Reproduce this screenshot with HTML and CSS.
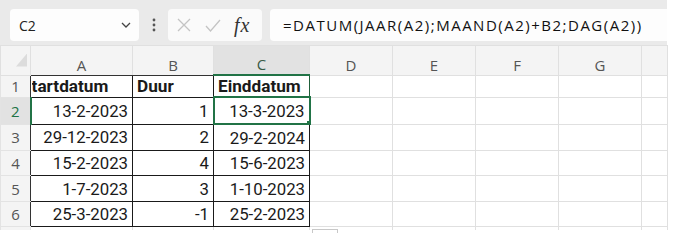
FILE: index.html
```html
<!DOCTYPE html>
<html lang="nl">
<head>
  <meta charset="UTF-8">
  <title>Einddatum</title>
  <link rel="stylesheet" href="styles.css">
</head>
<body>
  <div id="app">
    <div class="formula-bar">
      <div class="name-box">
        <span>C2</span>
        <svg class="chevron" width="10" height="6" viewBox="0 0 10 6"><path d="M1 1l4 4 4-4" fill="none" stroke="#444" stroke-width="1.3"/></svg>
      </div>
      <div class="grip">
        <svg width="4" height="14" viewBox="0 0 4 14"><circle cx="2" cy="2" r="1.4" fill="#555"/><circle cx="2" cy="7" r="1.4" fill="#555"/><circle cx="2" cy="12" r="1.4" fill="#555"/></svg>
      </div>
      <div class="fx-box">
        <svg width="14" height="14" viewBox="0 0 14 14"><path d="M1 1l12 12M13 1L1 13" stroke="#c4c4c4" stroke-width="1.3"/></svg>
        <svg width="16" height="13" viewBox="0 0 16 13"><path d="M1 7l4.5 5L15 1" fill="none" stroke="#c4c4c4" stroke-width="1.3"/></svg>
        <span class="fx">fx</span>
      </div>
      <div class="formula">=DATUM(JAAR(A2);MAAND(A2)+B2;DAG(A2))</div>
    </div>

    <table class="sheet">
      <colgroup>
        <col style="width:30px">
        <col style="width:102px">
        <col style="width:81px">
        <col style="width:96px">
        <col style="width:83px">
        <col style="width:83px">
        <col style="width:83px">
        <col style="width:83px">
        <col style="width:26px">
      </colgroup>
      <thead>
        <tr>
          <th class="corner"><span class="tri"></span></th>
          <th class="col-head dark">A</th>
          <th class="col-head dark">B</th>
          <th class="col-head active">C</th>
          <th class="col-head">D</th>
          <th class="col-head">E</th>
          <th class="col-head">F</th>
          <th class="col-head">G</th>
          <th class="col-head"></th>
        </tr>
      </thead>
      <tbody>
        <tr class="r1">
          <th class="row-head">1</th>
          <td class="box bold"><div class="clip"><span>Startdatum</span></div></td>
          <td class="box bold">Duur</td>
          <td class="box bold green-edge">Einddatum</td>
          <td></td><td></td><td></td><td></td><td></td>
        </tr>
        <tr class="r2">
          <th class="row-head active">2</th>
          <td class="box num">13-2-2023</td>
          <td class="box num">1</td>
          <td class="box num selected">13-3-2023<span class="handle"></span></td>
          <td></td><td></td><td></td><td></td><td></td>
        </tr>
        <tr class="r3">
          <th class="row-head">3</th>
          <td class="box num">29-12-2023</td>
          <td class="box num">2</td>
          <td class="box num">29-2-2024</td>
          <td></td><td></td><td></td><td></td><td></td>
        </tr>
        <tr class="r4">
          <th class="row-head">4</th>
          <td class="box num">15-2-2023</td>
          <td class="box num">4</td>
          <td class="box num">15-6-2023</td>
          <td></td><td></td><td></td><td></td><td></td>
        </tr>
        <tr class="r5">
          <th class="row-head">5</th>
          <td class="box num">1-7-2023</td>
          <td class="box num">3</td>
          <td class="box num">1-10-2023</td>
          <td></td><td></td><td></td><td></td><td></td>
        </tr>
        <tr class="r6">
          <th class="row-head">6</th>
          <td class="box num">25-3-2023</td>
          <td class="box num">-1</td>
          <td class="box num">25-2-2023</td>
          <td></td><td></td><td></td><td></td><td></td>
        </tr>
        <tr class="stub">
          <th class="row-head"></th>
          <td></td><td></td><td></td><td></td><td></td><td></td><td></td><td></td>
        </tr>
      </tbody>
    </table>
    <div class="scroll-thumb"></div>
  </div>
</body>
</html>
```

FILE: styles.css
```css
body {
  margin: 0;
  background-color: #ffffff;
  font-family: "Open Sans", "Noto Sans", Arial, sans-serif;
  color: #1a1a1a;
}

#app {
  width: 667px;
}

.formula-bar {
  display: flex;
  align-items: flex-start;
  height: 45px;
  padding-top: 9px;
  box-sizing: border-box;
  background-color: #eaeaea;
}

.name-box {
  display: flex;
  align-items: center;
  justify-content: space-between;
  width: 129px;
  height: 32px;
  margin-left: 10px;
  padding: 0 8px 0 9px;
  box-sizing: border-box;
  background-color: #fdfdfd;
  border-radius: 4px;
  font-size: 14px;
  color: #222;
}

.grip {
  display: flex;
  justify-content: center;
  align-items: center;
  width: 29px;
  height: 32px;
}

.fx-box {
  display: flex;
  align-items: center;
  width: 94px;
  height: 32px;
  padding-left: 9px;
  gap: 14px;
  box-sizing: border-box;
  background-color: #fafafa;
  border-radius: 4px;
}

.fx {
  font-family: "Liberation Serif", "DejaVu Serif", serif;
  font-style: italic;
  font-size: 20px;
  letter-spacing: 1px;
  color: #333;
  margin-left: -1px;
}

.formula {
  flex: 1;
  height: 32px;
  line-height: 32px;
  margin-left: 8px;
  padding-left: 13px;
  box-sizing: border-box;
  background-color: #fdfdfd;
  border-radius: 4px 0 0 4px;
  font-size: 15px;
  letter-spacing: 1.5px;
  color: #111;
  white-space: nowrap;
}

.sheet {
  border-collapse: collapse;
  table-layout: fixed;
  width: 667px;
}

.sheet th,
.sheet td {
  padding: 0 4px;
  border: 1px solid #e0e0e0;
  overflow: hidden;
  white-space: nowrap;
}

.col-head {
  height: 28px;
  background-color: #f4f4f4;
  border-color: #e3e3e3;
  border-bottom: 1px solid #c6c6c6;
  font-weight: normal;
  font-size: 15px;
  color: #555;
  vertical-align: bottom;
  padding-bottom: 3px;
}

.col-head.dark {
  border-bottom-color: #333;
}

.col-head.active {
  background-color: #e2e2e2;
  border-bottom: 2px solid #217346;
  color: #3a5a45;
}

.corner {
  background-color: #f4f4f4;
  border-color: #e3e3e3;
  border-bottom: 1px solid #c6c6c6;
  text-align: right;
  vertical-align: bottom;
  padding: 0 3px 3px 0 !important;
}

.tri {
  display: inline-block;
  width: 11px;
  height: 13px;
  background-color: #dcdcdc;
  clip-path: polygon(100% 0, 100% 100%, 0 100%);
}

.row-head {
  background-color: #f4f4f4;
  border-color: #e3e3e3 !important;
  border-right: 1px solid #333 !important;
  font-weight: normal;
  font-size: 15px;
  color: #555;
  text-align: center;
  padding: 0 !important;
}

.row-head.active {
  background-color: #e2e2e2;
  border-right: 2px solid #217346 !important;
  color: #217346;
}

.stub .row-head {
  border-right-color: #e3e3e3 !important;
}

.r1 td { height: 19px; }
.r2 td { height: 25px; }
.r3 td { height: 25px; }
.r4 td { height: 24px; }
.r5 td { height: 25px; }
.r6 td { height: 24px; }
.stub td,
.stub th { height: 3px; border-bottom: none; }

.box {
  border: 1px solid #1a1a1a !important;
  font-family: Roboto, "Open Sans", sans-serif;
  font-size: 16.8px;
}

.bold {
  font-weight: bold;
  font-size: 17.2px;
  padding-left: 3px;
}

.clip {
  overflow: hidden;
  margin-left: -3px;
}

.clip span {
  display: inline-block;
  margin-left: -11px;
}

.num {
  text-align: right;
  padding-right: 3px;
}

.green-edge {
  border-left-color: #1e5f3a !important;
  border-right-color: #1e5f3a !important;
}

.selected {
  position: relative;
  border: 2px solid #217346 !important;
}

.handle {
  position: absolute;
  right: -5px;
  bottom: -5px;
  width: 6px;
  height: 6px;
  background-color: #217346;
  border: 1px solid #ffffff;
}

.scroll-thumb {
  width: 24px;
  height: 3px;
  margin-left: 312px;
  margin-top: -1px;
  border: 1px solid #c8c8c8;
  border-bottom: none;
}
```
